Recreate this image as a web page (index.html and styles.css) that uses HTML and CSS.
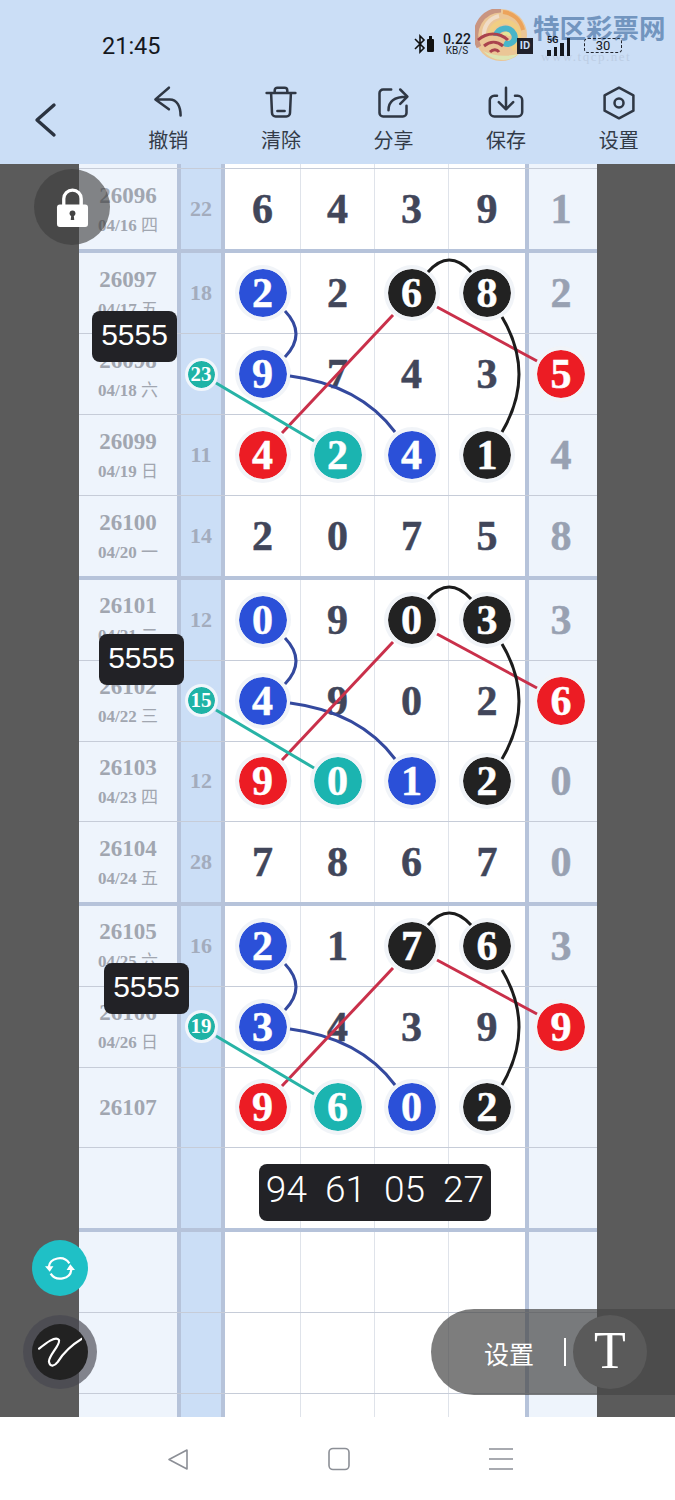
FILE: index.html
```html
<!DOCTYPE html>
<html lang="zh-CN">
	<head>
		<meta charset="UTF-8" />
		<meta name="viewport" content="width=device-width, initial-scale=1.0" />
		<title>走势图</title>
		<link rel="stylesheet" href="styles.css">
	</head>
	<body>
		<div class="phone">
			<header class="top">
				<div class="status">
					<span class="time">21:45</span>
					<div class="mark">
						<svg class="mark-logo" viewBox="0 0 52 52">
							<circle cx="26" cy="26" r="26" fill="#eec48e"/>
							<path d="M26 1A25 25 0 0 0 4 38" fill="none" stroke="#c98f78" stroke-width="5"/>
							<path d="M24 7C14 9 8 18 9 28" fill="none" stroke="#f4dcc4" stroke-width="4"/>
							<path d="M28 3c10 1 18 8 20 18" fill="none" stroke="#ef9f4e" stroke-width="4"/>
							<path d="M15 27C16 14 30 8 40 17c6 6 5 18-3 23" fill="none" stroke="#f5cd7a" stroke-width="5"/>
							<path d="M21 27c1-8 14-11 18-2 3 7-4 12-10 9" fill="none" stroke="#3fb2c6" stroke-width="6"/>
							<path d="M28 26c2-3 6-2 6 1" fill="none" stroke="#e4e88e" stroke-width="3"/>
							<path d="M8 42c6 6 12 9 20 9 7 0 12-3 15-6-12 3-25 2-35-3z" fill="#dfe6ae"/>
							<path d="M3 31c9-8 21-8 30 0M9 37c6-5 13-5 19 0M15 43c3-3 7-3 9 0" fill="none" stroke="#a8363f" stroke-width="3"/>
						</svg>
						<div class="mark-text">
							<strong>特区彩票网</strong>
							<small>www.tqcp.net</small>
						</div>
					</div>
					<div class="status-icons">
						<svg class="ico-bt" viewBox="0 0 22 20"><path d="M1 5l9 9-4 4V2l4 4-9 9" fill="none" stroke="#111" stroke-width="1.6"/><rect x="13" y="5" width="7" height="13" rx="1" fill="#111"/><rect x="15" y="2" width="3" height="3" fill="#111"/></svg>
						<span class="speed"><b>0.22</b><i>KB/S</i></span>
						<span class="hd">ID</span>
						<span class="signal"><em>5G</em><i></i><i></i><i></i><i></i></span>
						<span class="batt">30</span>
					</div>
				</div>
				<div class="toolbar">
					<svg class="back" viewBox="0 0 24 36"><path d="M21 3L4 18l17 15" fill="none" stroke="#2b3340" stroke-width="3.4" stroke-linecap="round" stroke-linejoin="round"/></svg>
					<div class="tools">
						<div class="tool">
							<svg viewBox="0 0 40 40"><path d="M21 3L6 16l15 11M8 16h14c8 0 12 8 12 18" fill="none" stroke="#2f3744" stroke-width="2.8" stroke-linecap="round" stroke-linejoin="round"/></svg>
							<span>撤销</span>
						</div>
						<div class="tool">
							<svg viewBox="0 0 40 40"><path d="M4 9h32M13 9V6a3 3 0 0 1 3-3h8a3 3 0 0 1 3 3v3M9 9l1 22a4 4 0 0 0 4 4h12a4 4 0 0 0 4-4l1-22" fill="none" stroke="#2f3744" stroke-width="2.8" stroke-linecap="round" stroke-linejoin="round"/><path d="M16 29h8" stroke="#2f3744" stroke-width="2.8" stroke-linecap="round"/></svg>
							<span>清除</span>
						</div>
						<div class="tool">
							<svg viewBox="0 0 40 40"><path d="M18 5H9a4 4 0 0 0-4 4v22a4 4 0 0 0 4 4h22a4 4 0 0 0 4-4v-8" fill="none" stroke="#2f3744" stroke-width="2.8" stroke-linecap="round"/><path d="M15 28c0-10 7-15 20-15M28 5l8 8-8 8" fill="none" stroke="#2f3744" stroke-width="2.8" stroke-linecap="round" stroke-linejoin="round"/></svg>
							<span>分享</span>
						</div>
						<div class="tool">
							<svg viewBox="0 0 40 40"><path d="M10 12H7a5 5 0 0 0-5 5v13a5 5 0 0 0 5 5h26a5 5 0 0 0 5-5V17a5 5 0 0 0-5-5h-3" fill="none" stroke="#2f3744" stroke-width="2.8" stroke-linecap="round"/><path d="M20 3v24M12 19l8 8 8-8" fill="none" stroke="#2f3744" stroke-width="2.8" stroke-linecap="round" stroke-linejoin="round"/></svg>
							<span>保存</span>
						</div>
						<div class="tool">
							<svg viewBox="0 0 40 40"><path d="M20 3l16 8.500v17L20 37 4 28.500v-17z" fill="none" stroke="#2f3744" stroke-width="2.8" stroke-linejoin="round"/><circle cx="20" cy="20" r="5" fill="none" stroke="#2f3744" stroke-width="2.8"/></svg>
							<span>设置</span>
						</div>
					</div>
				</div>
			</header>

			<main class="board">
				<div class="sheet">
					<div class="row row-stub"><div class="no"></div><div class="sum"></div><div class="c"></div><div class="c"></div><div class="c"></div><div class="c"></div><div class="last"></div></div>

					<section class="block block-one">
						<div class="row"><div class="no"><b>26096</b><span>04/16 <i>四</i></span></div><div class="sum">22</div><div class="c">6</div><div class="c">4</div><div class="c">3</div><div class="c">9</div><div class="last">1</div></div>
					</section>

					<section class="block">
						<div class="row"><div class="no"><b>26097</b><span>04/17 <i>五</i></span></div><div class="sum">18</div><div class="c"><i class="ball blue">2</i></div><div class="c">2</div><div class="c"><i class="ball black">6</i></div><div class="c"><i class="ball black">8</i></div><div class="last">2</div></div>
						<div class="row"><div class="no"><b>26098</b><span>04/18 <i>六</i></span></div><div class="sum"><i class="mini">23</i></div><div class="c"><i class="ball blue">9</i></div><div class="c">7</div><div class="c">4</div><div class="c">3</div><div class="last"><i class="ball red">5</i></div></div>
						<div class="row"><div class="no"><b>26099</b><span>04/19 <i>日</i></span></div><div class="sum">11</div><div class="c"><i class="ball red">4</i></div><div class="c"><i class="ball teal">2</i></div><div class="c"><i class="ball blue">4</i></div><div class="c"><i class="ball black">1</i></div><div class="last">4</div></div>
						<div class="row"><div class="no"><b>26100</b><span>04/20 <i>一</i></span></div><div class="sum">14</div><div class="c">2</div><div class="c">0</div><div class="c">7</div><div class="c">5</div><div class="last">8</div></div>
					</section>

					<section class="block block-short">
						<div class="row"><div class="no"><b>26101</b><span>04/21 <i>二</i></span></div><div class="sum">12</div><div class="c"><i class="ball blue">0</i></div><div class="c">9</div><div class="c"><i class="ball black">0</i></div><div class="c"><i class="ball black">3</i></div><div class="last">3</div></div>
						<div class="row"><div class="no"><b>26102</b><span>04/22 <i>三</i></span></div><div class="sum"><i class="mini">15</i></div><div class="c"><i class="ball blue">4</i></div><div class="c">9</div><div class="c">0</div><div class="c">2</div><div class="last"><i class="ball red">6</i></div></div>
						<div class="row"><div class="no"><b>26103</b><span>04/23 <i>四</i></span></div><div class="sum">12</div><div class="c"><i class="ball red">9</i></div><div class="c"><i class="ball teal">0</i></div><div class="c"><i class="ball blue">1</i></div><div class="c"><i class="ball black">2</i></div><div class="last">0</div></div>
						<div class="row"><div class="no"><b>26104</b><span>04/24 <i>五</i></span></div><div class="sum">28</div><div class="c">7</div><div class="c">8</div><div class="c">6</div><div class="c">7</div><div class="last">0</div></div>
					</section>

					<section class="block block-short">
						<div class="row"><div class="no"><b>26105</b><span>04/25 <i>六</i></span></div><div class="sum">16</div><div class="c"><i class="ball blue">2</i></div><div class="c">1</div><div class="c"><i class="ball black">7</i></div><div class="c"><i class="ball black">6</i></div><div class="last">3</div></div>
						<div class="row"><div class="no"><b>26106</b><span>04/26 <i>日</i></span></div><div class="sum"><i class="mini">19</i></div><div class="c"><i class="ball blue">3</i></div><div class="c">4</div><div class="c">3</div><div class="c">9</div><div class="last"><i class="ball red">9</i></div></div>
						<div class="row"><div class="no"><b>26107</b></div><div class="sum"></div><div class="c"><i class="ball red">9</i></div><div class="c"><i class="ball teal">6</i></div><div class="c"><i class="ball blue">0</i></div><div class="c"><i class="ball black">2</i></div><div class="last"></div></div>
						<div class="row"><div class="no"></div><div class="sum"></div><div class="c"></div><div class="c"></div><div class="c"></div><div class="c"></div><div class="last"></div></div>
					</section>

					<section class="block">
						<div class="row"><div class="no"></div><div class="sum"></div><div class="c"></div><div class="c"></div><div class="c"></div><div class="c"></div><div class="last"></div></div>
						<div class="row"><div class="no"></div><div class="sum"></div><div class="c"></div><div class="c"></div><div class="c"></div><div class="c"></div><div class="last"></div></div>
						<div class="row"><div class="no"></div><div class="sum"></div><div class="c"></div><div class="c"></div><div class="c"></div><div class="c"></div><div class="last"></div></div>
						<div class="row"><div class="no"></div><div class="sum"></div><div class="c"></div><div class="c"></div><div class="c"></div><div class="c"></div><div class="last"></div></div>
					</section>

					<!-- viewBox uses page coordinates, sheet starts at 79,164 -->
					<svg class="links" viewBox="79 164 518 1253">
						<defs>
							<g id="link-set" fill="none" stroke-width="3">
								<path d="M285 311Q307 334 285 357" stroke="#34499e"/>
								<path d="M290 376Q360 385 395 432" stroke="#34499e"/>
								<path d="M282 433L393 315" stroke="#c9304a"/>
								<path d="M437 307L537 361" stroke="#c9304a"/>
								<path d="M216 383L314 441" stroke="#28b3a6"/>
								<path d="M428 272Q449 248 471 272" stroke="#1c1c1c"/>
								<path d="M502 317Q536 374 502 432" stroke="#1c1c1c"/>
							</g>
						</defs>
						<use href="#link-set"/>
						<use href="#link-set" y="327"/>
						<use href="#link-set" y="653"/>
					</svg>

					<div class="tag tag-a">5555</div>
					<div class="tag tag-b">5555</div>
					<div class="tag tag-c">5555</div>
					<div class="pick">94&nbsp;&nbsp;61&nbsp;&nbsp;05&nbsp;&nbsp;27</div>
				</div>
			</main>

			<nav class="navbar">
				<svg viewBox="0 0 24 24"><path d="M21 3v19L3 12.500z" fill="none" stroke="#8c8f96" stroke-width="1.6" stroke-linejoin="round"/></svg>
				<svg viewBox="0 0 24 24"><rect x="2" y="1.500" width="20" height="21" rx="4" fill="none" stroke="#8c8f96" stroke-width="1.6"/></svg>
				<svg viewBox="0 0 24 24"><path d="M0 2h24M0 12h24M0 22h24" fill="none" stroke="#8c8f96" stroke-width="1.6"/></svg>
			</nav>

			<button class="fab lock">
				<svg viewBox="0 0 34 40"><path d="M8 18V11a9 9 0 0 1 18 0v7" fill="none" stroke="#fff" stroke-width="3.400"/><rect x="1" y="17" width="32" height="23" rx="3" fill="#fff"/><circle cx="17" cy="26" r="3" fill="#444"/><path d="M15.800 27h2.400l.6 6h-3.600z" fill="#444"/></svg>
			</button>
			<button class="fab sync">
				<svg viewBox="0 0 32 32"><path d="M4 15C5 5 20 2 26 11M28 18c-1 10-16 13-22 4" fill="none" stroke="#fff" stroke-width="2.400"/><path d="M0 14h9l-4 6zM32 18h-9l4-6z" fill="#fff"/></svg>
			</button>
			<button class="fab pen">
				<span class="pen-dot">
					<svg viewBox="0 0 40 32"><path d="M1 13C7 8 16 1 19 5 21 9 9 20 10 25 11 30 15 29 18 25 23 17 30 10 40 4" fill="none" stroke="#fff" stroke-width="2" stroke-linecap="round"/></svg>
				</span>
			</button>
			<div class="pill">
				<span class="pill-label">设置</span>
				<i class="pill-sep"></i>
				<span class="pill-t">T</span>
			</div>
		</div>
	</body>
</html>
```

FILE: styles.css
```css
* {
	box-sizing: border-box;
}
body {
	margin: 0;
	background: #fff;
	font-family: "Noto Sans CJK SC", "Noto Sans", sans-serif;
}
.phone {
	position: relative;
	width: 675px;
	height: 1500px;
	overflow: hidden;
	display: flex;
	flex-direction: column;
}

/* header */
.top {
	height: 164px;
	background: #cbdef6;
	color: #2f3744;
}
.status {
	position: relative;
	height: 76px;
}
.time {
	position: absolute;
	left: 102px;
	top: 32px;
	font: 400 23.500px/28px Roboto, sans-serif;
	color: #15181e;
}
.status-icons {
	position: absolute;
	left: 414px;
	top: 30px;
	display: flex;
	align-items: center;
	height: 28px;
	color: #15181e;
}
.ico-bt {
	width: 22px;
	height: 20px;
	margin-right: 6px;
}
.speed {
	display: flex;
	flex-direction: column;
	align-items: center;
	width: 30px;
	font-family: Roboto, sans-serif;
	line-height: 10px;
}
.speed b {
	font-size: 14px;
	font-weight: 500;
	line-height: 13px;
}
.speed i {
	font-size: 10px;
	font-style: normal;
}
.hd {
	margin-left: 45px;
	margin-top: 3px;
	width: 16px;
	height: 16px;
	background: #20212b;
	color: #cbdef6;
	font: 700 11px/16px Roboto, sans-serif;
	text-align: center;
}
.signal {
	display: flex;
	align-items: flex-end;
	gap: 3px;
	position: relative;
	height: 19px;
	margin-top: 4px;
	margin-left: 14px;
	width: 28px;
}
.signal em {
	position: absolute;
	left: 0;
	top: -2px;
	font: 700 9px/10px Roboto, sans-serif;
}
.signal i {
	width: 3.500px;
	background: #15181e;
	height: 6px;
}
.signal i:nth-of-type(2) {
	height: 9px;
}
.signal i:nth-of-type(3) {
	height: 13px;
}
.signal i:nth-of-type(4) {
	height: 18px;
}
.batt {
	margin-left: 9px;
	margin-top: 3px;
	width: 38px;
	height: 15px;
	border: 1px dashed #20242c;
	border-radius: 4px;
	font: 400 13px/13px Roboto, sans-serif;
	text-align: center;
}
.mark {
	position: absolute;
	left: 475px;
	top: 9px;
	display: flex;
}
.mark-logo {
	width: 52px;
	height: 52px;
	opacity: .92;
}
.mark-text {
	margin-left: 6px;
	display: flex;
	flex-direction: column;
}
.mark-text strong {
	font-size: 26.500px;
	line-height: 36px;
	font-weight: 700;
	color: #7295bf;
	white-space: nowrap;
}
.mark-text small {
	margin: 5px 0 0 8px;
	font: 400 13px/13px "Liberation Serif", serif;
	letter-spacing: 1.500px;
	color: #bccde4;
}
.toolbar {
	height: 88px;
	position: relative;
}
.back {
	position: absolute;
	left: 33px;
	top: 26px;
	width: 24px;
	height: 36px;
}
.tools {
	position: absolute;
	left: 112px;
	top: 9px;
	width: 563px;
	display: grid;
	grid-template-columns: repeat(5, 1fr);
}
.tool {
	display: flex;
	flex-direction: column;
	align-items: center;
}
.tool svg {
	width: 36px;
	height: 36px;
}
.tool span {
	font-size: 20px;
	line-height: 28px;
	margin-top: 5px;
	color: #333b48;
}

/* board */
.board {
	height: 1253px;
	background: #5b5b5b;
	padding-left: 79px;
}
.sheet {
	position: relative;
	width: 518px;
	height: 1253px;
	overflow: hidden;
	background: #fff;
}
.block {
	height: 327px;
	border-bottom: 4px solid #b6c3da;
	display: flex;
	flex-direction: column;
}
.block-one {
	height: 84px;
}
.block-short {
	height: 326px;
}
.row {
	flex: 1;
	display: grid;
	grid-template-columns: 98px 48px 76px 74px 74px 76px 72px;
	border-bottom: 1px solid #c6ccd8;
	min-height: 0;
}
.block .row:last-child {
	border-bottom: 0;
}
.row-stub {
	flex: none;
	height: 5px;
}
.no {
	display: flex;
	flex-direction: column;
	align-items: center;
	justify-content: center;
	padding-top: 2px;
	background: #eef4fc;
	color: #a1a6b0;
	font-family: "Liberation Serif", "Noto Sans CJK SC", serif;
}
.no b {
	font-size: 23px;
	line-height: 26px;
}
.no span {
	margin-top: 3px;
	font-size: 17px;
	font-weight: 700;
	line-height: 24px;
	white-space: nowrap;
}
.no i {
	font-style: normal;
	font-weight: 400;
	font-family: "Noto Sans CJK SC", sans-serif;
}
.sum {
	display: flex;
	align-items: center;
	justify-content: center;
	background: #cbdef6;
	border-left: 4px solid #b6c3da;
	border-right: 4px solid #b6c3da;
	color: #a3acbd;
	font: 700 22px "Liberation Serif", serif;
}
.c,
.last {
	display: flex;
	align-items: center;
	justify-content: center;
	font: 700 42px "Liberation Serif", serif;
	-webkit-text-stroke: .5px currentColor;
	color: #41465a;
}
.c {
	border-right: 1px solid #dfe3ea;
}
.c:nth-child(6) {
	border-right: 0;
}
.last {
	background: #eef4fc;
	border-left: 4px solid #b6c3da;
	padding-right: 4px;
	color: #98a1b2;
}

/* balls */
.ball {
	width: 56px;
	height: 56px;
	flex: none;
	display: flex;
	align-items: center;
	justify-content: center;
	border: 4px solid rgba(240, 243, 248, .95);
	border-radius: 50%;
	color: #fff;
	font-style: normal;
	background-clip: padding-box;
}
.blue {
	background-color: #2b50d8;
}
.red {
	background-color: #ec1c24;
}
.teal {
	background-color: #1bb4b0;
}
.black {
	background-color: #222;
}
.mini {
	width: 33px;
	height: 33px;
	flex: none;
	display: flex;
	align-items: center;
	justify-content: center;
	background: #1fb3a6;
	background-clip: padding-box;
	border: 3px solid #f1f6fb;
	border-radius: 50%;
	color: #fff;
	font-style: normal;
	font-size: 21px;
}

.links {
	position: absolute;
	left: 0;
	top: 0;
	width: 518px;
	height: 1253px;
	pointer-events: none;
}
.tag,
.pick {
	position: absolute;
	background: #222226;
	color: #fff;
	border-radius: 8px;
	text-align: center;
	font-family: "Liberation Sans", sans-serif;
}
.tag {
	width: 85px;
	height: 51px;
	font-size: 30px;
	line-height: 48px;
}
.tag-a {
	left: 13px;
	top: 147px;
}
.tag-b {
	left: 20px;
	top: 470px;
}
.tag-c {
	left: 25px;
	top: 799px;
}
.pick {
	left: 180px;
	top: 1000px;
	width: 232px;
	height: 57px;
	font-family: Roboto, sans-serif;
	font-size: 37px;
	font-weight: 300;
	line-height: 52px;
	white-space: nowrap;
}

/* bottom bar */
.navbar {
	height: 83px;
	background: #fff;
	position: relative;
}
.navbar svg {
	position: absolute;
	top: 30px;
	width: 24px;
	height: 24px;
}
.navbar svg:nth-child(1) {
	left: 166px;
}
.navbar svg:nth-child(2) {
	left: 327px;
}
.navbar svg:nth-child(3) {
	left: 489px;
}

/* floating buttons */
.fab {
	position: absolute;
	padding: 0;
	border: 0;
	border-radius: 50%;
	display: flex;
	align-items: center;
	justify-content: center;
}
.lock {
	left: 34px;
	top: 169px;
	width: 76px;
	height: 76px;
	background: rgba(62, 62, 62, .62);
}
.lock svg {
	width: 33px;
	height: 39px;
}
.sync {
	left: 32px;
	top: 1240px;
	width: 56px;
	height: 56px;
	background: #1fc0c6;
}
.sync svg {
	width: 30px;
	height: 30px;
}
.pen {
	left: 23px;
	top: 1315px;
	width: 74px;
	height: 74px;
	background: rgba(70, 70, 80, .65);
}
.pen-dot {
	width: 56px;
	height: 56px;
	border-radius: 50%;
	background: #222;
	display: flex;
	align-items: center;
	justify-content: center;
}
.pen-dot svg {
	width: 44px;
	height: 36px;
}
.pill {
	position: absolute;
	left: 431px;
	top: 1309px;
	width: 244px;
	height: 86px;
	border-radius: 43px 0 0 43px;
	background: rgba(70, 70, 70, .7);
	color: #fff;
}
.pill-label {
	position: absolute;
	left: 53px;
	top: 26px;
	font-size: 25px;
	line-height: 36px;
}
.pill-sep {
	position: absolute;
	left: 133px;
	top: 29px;
	width: 2px;
	height: 28px;
	background: #fff;
}
.pill-t {
	position: absolute;
	left: 142px;
	top: 6px;
	width: 74px;
	height: 74px;
	border-radius: 50%;
	background: #5a5a5a;
	font: 400 52px/72px "Liberation Serif", serif;
	text-align: center;
}
```
